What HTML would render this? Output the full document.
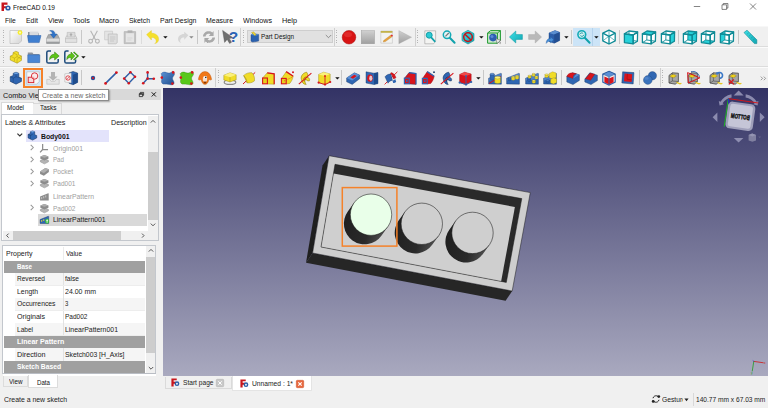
<!DOCTYPE html>
<html><head><meta charset="utf-8"><title>FreeCAD 0.19</title>
<style>
html,body{margin:0;padding:0;background:#f0f0f0;}
body{width:768px;height:408px;overflow:hidden;position:relative;font-family:"Liberation Sans",sans-serif;}
#root{position:absolute;left:0;top:0;width:768px;height:408px;overflow:hidden;background:#f0f0f0;}
.t{position:absolute;white-space:nowrap;line-height:normal;transform-origin:0 0;display:block;}
.b{position:absolute;box-sizing:border-box;}
svg{position:absolute;overflow:visible;}
</style></head><body><div id="root">
<div class="b" style="left:0px;top:0px;width:768px;height:26px;background:#ffffff;"></div>
<span class="t" style="left:13.00px;top:3.00px;font-size:7.3px;color:#111;transform:scaleX(0.9001);">FreeCAD 0.19</span>
<svg style="left:1px;top:1px" width="11" height="11" viewBox="0 0 11 11"><path d="M0.5 1.5h6v2.2H3v1.6h2.5v2H3V10H0.5z" fill="#c8161d"/><circle cx="7" cy="7" r="2.6" fill="#2b5ea7"/><circle cx="7" cy="7" r="1" fill="#fff"/></svg>
<span class="t" style="left:4.60px;top:16.00px;font-size:7.3px;color:#111;transform:scaleX(0.9181);">File</span>
<span class="t" style="left:25.60px;top:16.00px;font-size:7.3px;color:#111;transform:scaleX(0.9460);">Edit</span>
<span class="t" style="left:47.50px;top:16.00px;font-size:7.3px;color:#111;transform:scaleX(0.9878);">View</span>
<span class="t" style="left:72.70px;top:16.00px;font-size:7.3px;color:#111;transform:scaleX(0.9858);">Tools</span>
<span class="t" style="left:99.00px;top:16.00px;font-size:7.3px;color:#111;transform:scaleX(0.9861);">Macro</span>
<span class="t" style="left:129.00px;top:16.00px;font-size:7.3px;color:#111;transform:scaleX(0.9410);">Sketch</span>
<span class="t" style="left:159.50px;top:16.00px;font-size:7.3px;color:#111;transform:scaleX(0.9570);">Part Design</span>
<span class="t" style="left:206.00px;top:16.00px;font-size:7.3px;color:#111;transform:scaleX(0.9506);">Measure</span>
<span class="t" style="left:243.00px;top:16.00px;font-size:7.3px;color:#111;transform:scaleX(0.9793);">Windows</span>
<span class="t" style="left:282.00px;top:16.00px;font-size:7.3px;color:#111;transform:scaleX(0.9991);">Help</span>
<svg style="left:690px;top:0" width="78" height="13" viewBox="0 0 78 13"><g stroke="#333" stroke-width="0.6" fill="none"><path d="M3.8 6.5h6.4"/><path d="M32 4.8h4.6v4.6H32z M33.3 4.8V3.5h4.6v4.6h-1.3"/><path d="M60 3.5l6 6M66 3.5l-6 6"/></g></svg>
<div class="b" style="left:0px;top:26px;width:768px;height:62px;background:#f0f0f0;"></div>
<div class="b" style="left:0px;top:46px;width:768px;height:0.7px;background:#dcdcdc;"></div>
<div class="b" style="left:0px;top:46.7px;width:768px;height:0.8px;background:#fbfbfb;"></div>
<div class="b" style="left:0px;top:66px;width:768px;height:0.7px;background:#dcdcdc;"></div>
<div class="b" style="left:0px;top:66.7px;width:768px;height:0.8px;background:#fbfbfb;"></div>
<div class="b" style="left:0px;top:26px;width:768px;height:1px;background:#f7f7f7;"></div>
<div class="b" style="left:3px;top:30px;width:1px;height:14px;background:repeating-linear-gradient(#b5b5b5 0 1px,transparent 1px 2.5px);"></div>
<div class="b" style="left:243px;top:30px;width:1px;height:14px;background:repeating-linear-gradient(#b5b5b5 0 1px,transparent 1px 2.5px);"></div>
<div class="b" style="left:336px;top:30px;width:1px;height:14px;background:repeating-linear-gradient(#b5b5b5 0 1px,transparent 1px 2.5px);"></div>
<div class="b" style="left:417px;top:30px;width:1px;height:14px;background:repeating-linear-gradient(#b5b5b5 0 1px,transparent 1px 2.5px);"></div>
<div class="b" style="left:3px;top:50px;width:1px;height:14px;background:repeating-linear-gradient(#b5b5b5 0 1px,transparent 1px 2.5px);"></div>
<div class="b" style="left:3px;top:70px;width:1px;height:15px;background:repeating-linear-gradient(#b5b5b5 0 1px,transparent 1px 2.5px);"></div>
<div class="b" style="left:217.5px;top:70px;width:1px;height:15px;background:repeating-linear-gradient(#b5b5b5 0 1px,transparent 1px 2.5px);"></div>
<div class="b" style="left:662px;top:70px;width:1px;height:15px;background:repeating-linear-gradient(#b5b5b5 0 1px,transparent 1px 2.5px);"></div>
<div class="b" style="left:81px;top:30px;width:1px;height:14px;background:#c8c8c8;"></div>
<div class="b" style="left:197px;top:30px;width:1px;height:14px;background:#c8c8c8;"></div>
<div class="b" style="left:218px;top:30px;width:1px;height:14px;background:#c8c8c8;"></div>
<div class="b" style="left:505px;top:30px;width:1px;height:14px;background:#c8c8c8;"></div>
<div class="b" style="left:571px;top:30px;width:1px;height:14px;background:#c8c8c8;"></div>
<div class="b" style="left:619px;top:30px;width:1px;height:14px;background:#c8c8c8;"></div>
<div class="b" style="left:678px;top:30px;width:1px;height:14px;background:#c8c8c8;"></div>
<div class="b" style="left:738px;top:30px;width:1px;height:14px;background:#c8c8c8;"></div>
<div class="b" style="left:141px;top:30px;width:1px;height:14px;background:#dcdcdc;"></div>
<div class="b" style="left:240px;top:28px;width:1px;height:18px;background:#d0d0d0;"></div>
<div class="b" style="left:333.5px;top:28px;width:1px;height:18px;background:#d0d0d0;"></div>
<div class="b" style="left:414.5px;top:28px;width:1px;height:18px;background:#d0d0d0;"></div>
<div class="b" style="left:81px;top:70px;width:1px;height:15px;background:#c8c8c8;"></div>
<div class="b" style="left:483px;top:70px;width:1px;height:15px;background:#c8c8c8;"></div>
<div class="b" style="left:561px;top:70px;width:1px;height:15px;background:#c8c8c8;"></div>
<div class="b" style="left:639px;top:70px;width:1px;height:15px;background:#c8c8c8;"></div>
<div class="b" style="left:215px;top:68px;width:1px;height:19px;background:#d0d0d0;"></div>
<div class="b" style="left:659.5px;top:68px;width:1px;height:19px;background:#d0d0d0;"></div>
<div class="b" style="left:341px;top:70px;width:1px;height:15px;background:#c8c8c8;"></div>
<div class="b" style="left:247px;top:30px;width:86px;height:13px;background:#e1e1e1;border:1px solid #cecece;"></div>
<span class="t" style="left:261.00px;top:32.00px;font-size:7.3px;color:#111;transform:scaleX(0.8652);">Part Design</span>
<svg style="left:325px;top:34px" width="7" height="5" viewBox="0 0 7 5"><path d="M0.8 1l2.7 2.7L6.2 1" stroke="#555" stroke-width="0.6" fill="none"/></svg>
<div class="b" style="left:0px;top:88px;width:163px;height:302px;background:#f0f0f0;"></div>
<div class="b" style="left:0px;top:88.5px;width:160.5px;height:11px;background:#d9d9d9;"></div>
<span class="t" style="left:3.00px;top:91.00px;font-size:7.3px;color:#111;transform:scaleX(0.9939);">Combo View</span>
<svg style="left:136px;top:89px" width="24" height="10" viewBox="0 0 24 10"><g stroke="#1a1a1a" fill="none"><path d="M3.300 4.700h3.300v2.900H3.300zM4.300 4.500V3.400h3.300v2.900H6.800" stroke-width="0.750"/><path d="M3.300 5.100h3.300" stroke-width="0.900"/><path d="M15.700 3.300l4.200 4.200M19.900 3.300l-4.200 4.200" stroke-width="1"/></g></svg>
<div class="b" style="left:1px;top:101.5px;width:32.5px;height:13.5px;background:#ffffff;border:1px solid #d9d9d9;border-bottom:none;"></div>
<div class="b" style="left:33px;top:103px;width:28.5px;height:11.5px;background:#f0f0f0;border:1px solid #d9d9d9;border-left:none;"></div>
<span class="t" style="left:7.00px;top:103.00px;font-size:7.3px;color:#111;transform:scaleX(0.8550);">Model</span>
<span class="t" style="left:39.50px;top:103.00px;font-size:7.3px;color:#111;transform:scaleX(0.8842);">Tasks</span>
<div class="b" style="left:1px;top:114px;width:158px;height:127px;background:#ffffff;border:1px solid #c3c7cd;"></div>
<span class="t" style="left:4.50px;top:118.00px;font-size:7.3px;color:#222;transform:scaleX(0.9939);">Labels & Attributes</span>
<span class="t" style="left:111.30px;top:118.00px;font-size:7.3px;color:#222;transform:scaleX(0.9777);">Description</span>
<div class="b" style="left:148px;top:115.5px;width:9.5px;height:115.5px;background:#f0f0f0;"></div>
<div class="b" style="left:148px;top:152px;width:9.5px;height:68px;background:#cdcdcd;"></div>
<svg style="left:148px;top:116px" width="10" height="114" viewBox="0 0 10 114"><g stroke="#444" stroke-width="0.9" fill="none"><path d="M2.8 6.6L5 4.4 7.2 6.6"/><path d="M2.8 107.6L5 109.8 7.2 107.6"/></g></svg>
<div class="b" style="left:2.5px;top:231px;width:145.5px;height:9px;background:#f0f0f0;"></div>
<div class="b" style="left:12.5px;top:231px;width:108.5px;height:9px;background:#cdcdcd;"></div>
<div class="b" style="left:148px;top:231px;width:9.5px;height:9px;background:#f0f0f0;"></div>
<svg style="left:2.5px;top:231px" width="146" height="9" viewBox="0 0 146 9"><g stroke="#444" stroke-width="0.9" fill="none"><path d="M5.6 2.6L3.6 4.6 5.6 6.6"/><path d="M139 2.6l2 2-2 2"/></g></svg>
<div class="b" style="left:26px;top:129.75px;width:83px;height:12px;background:#e3e3fb;"></div>
<div class="b" style="left:38px;top:213.5px;width:109px;height:12px;background:#d9d9d9;"></div>
<svg style="left:16px;top:132px" width="8" height="6" viewBox="0 0 8 6"><path d="M1.4 1.6L3.800 4 6.200 1.600" stroke="#333" stroke-width="1.150" fill="none"/></svg>
<span class="t" style="left:41.00px;top:132.00px;font-size:7.3px;color:#111;font-weight:bold;transform:scaleX(0.9366);">Body001</span>
<span class="t" style="left:53.00px;top:144.00px;font-size:7.3px;color:#a0a0a0;transform:scaleX(0.9478);">Origin001</span>
<svg style="left:29px;top:144.4px" width="6" height="7" viewBox="0 0 6 7"><path d="M1.700 0.800l2.600 2.700L1.700 6.200" stroke="#979797" stroke-width="1.050" fill="none"/></svg>
<span class="t" style="left:53.00px;top:155.00px;font-size:7.3px;color:#a0a0a0;transform:scaleX(0.8468);">Pad</span>
<svg style="left:29px;top:156.25px" width="6" height="7" viewBox="0 0 6 7"><path d="M1.700 0.800l2.600 2.700L1.700 6.200" stroke="#979797" stroke-width="1.050" fill="none"/></svg>
<span class="t" style="left:53.00px;top:167.00px;font-size:7.3px;color:#a0a0a0;transform:scaleX(0.8962);">Pocket</span>
<svg style="left:29px;top:168.1px" width="6" height="7" viewBox="0 0 6 7"><path d="M1.700 0.800l2.600 2.700L1.700 6.200" stroke="#979797" stroke-width="1.050" fill="none"/></svg>
<span class="t" style="left:53.00px;top:179.00px;font-size:7.3px;color:#a0a0a0;transform:scaleX(0.8939);">Pad001</span>
<svg style="left:29px;top:180.25px" width="6" height="7" viewBox="0 0 6 7"><path d="M1.700 0.800l2.600 2.700L1.700 6.200" stroke="#979797" stroke-width="1.050" fill="none"/></svg>
<span class="t" style="left:53.00px;top:192.00px;font-size:7.3px;color:#a0a0a0;transform:scaleX(0.9354);">LinearPattern</span>
<span class="t" style="left:53.00px;top:204.00px;font-size:7.3px;color:#a0a0a0;transform:scaleX(0.8939);">Pad002</span>
<svg style="left:29px;top:204.4px" width="6" height="7" viewBox="0 0 6 7"><path d="M1.700 0.800l2.600 2.700L1.700 6.200" stroke="#979797" stroke-width="1.050" fill="none"/></svg>
<span class="t" style="left:53.00px;top:215.00px;font-size:7.3px;color:#222;transform:scaleX(0.9409);">LinearPattern001</span>
<div class="b" style="left:2px;top:245px;width:154px;height:129.2px;background:#ffffff;border:1px solid #c3c7cd;"></div>
<span class="t" style="left:5.50px;top:249.00px;font-size:7.3px;color:#222;transform:scaleX(0.9605);">Property</span>
<span class="t" style="left:66.00px;top:249.00px;font-size:7.3px;color:#222;transform:scaleX(0.8825);">Value</span>
<div class="b" style="left:62.5px;top:247px;width:0.6px;height:13px;background:#ececec;"></div>
<div class="b" style="left:3.5px;top:260.6px;width:141.5px;height:12.55px;background:#a0a0a0;"></div>
<span class="t" style="left:17.00px;top:262.00px;font-size:7.3px;color:#ffffff;font-weight:bold;transform:scaleX(0.8595);">Base</span>
<div class="b" style="left:15px;top:273.15px;width:130px;height:12.55px;background:#f5f5f5;"></div>
<div class="b" style="left:62.5px;top:273.15px;width:0.6px;height:12.55px;background:#e2e2e2;"></div>
<div class="b" style="left:15px;top:285.2px;width:130px;height:0.5px;background:#ededed;"></div>
<span class="t" style="left:17.00px;top:274.00px;font-size:7.3px;color:#222;transform:scaleX(0.8962);">Reversed</span>
<span class="t" style="left:65.00px;top:274.00px;font-size:7.3px;color:#222;transform:scaleX(0.9079);">false</span>
<div class="b" style="left:15px;top:285.7px;width:130px;height:12.55px;background:#ffffff;"></div>
<div class="b" style="left:62.5px;top:285.7px;width:0.6px;height:12.55px;background:#e2e2e2;"></div>
<div class="b" style="left:15px;top:297.75px;width:130px;height:0.5px;background:#ededed;"></div>
<span class="t" style="left:17.00px;top:287.00px;font-size:7.3px;color:#222;transform:scaleX(0.9405);">Length</span>
<span class="t" style="left:65.00px;top:287.00px;font-size:7.3px;color:#222;transform:scaleX(0.9551);">24.00 mm</span>
<div class="b" style="left:15px;top:298.25px;width:130px;height:12.55px;background:#f5f5f5;"></div>
<div class="b" style="left:62.5px;top:298.25px;width:0.6px;height:12.55px;background:#e2e2e2;"></div>
<div class="b" style="left:15px;top:310.3px;width:130px;height:0.5px;background:#ededed;"></div>
<span class="t" style="left:17.00px;top:299.00px;font-size:7.3px;color:#222;transform:scaleX(0.9304);">Occurrences</span>
<span class="t" style="left:65.00px;top:299.00px;font-size:7.3px;color:#222;transform:scaleX(0.8128);">3</span>
<div class="b" style="left:15px;top:310.8px;width:130px;height:12.55px;background:#ffffff;"></div>
<div class="b" style="left:62.5px;top:310.8px;width:0.6px;height:12.55px;background:#e2e2e2;"></div>
<div class="b" style="left:15px;top:322.85px;width:130px;height:0.5px;background:#ededed;"></div>
<span class="t" style="left:17.00px;top:312.00px;font-size:7.3px;color:#222;transform:scaleX(0.9720);">Originals</span>
<span class="t" style="left:65.00px;top:312.00px;font-size:7.3px;color:#222;transform:scaleX(0.8939);">Pad002</span>
<div class="b" style="left:15px;top:323.35px;width:130px;height:12.55px;background:#f5f5f5;"></div>
<div class="b" style="left:62.5px;top:323.35px;width:0.6px;height:12.55px;background:#e2e2e2;"></div>
<div class="b" style="left:15px;top:335.4px;width:130px;height:0.5px;background:#ededed;"></div>
<span class="t" style="left:17.00px;top:325.00px;font-size:7.3px;color:#222;transform:scaleX(0.8957);">Label</span>
<span class="t" style="left:65.00px;top:325.00px;font-size:7.3px;color:#222;transform:scaleX(0.9463);">LinearPattern001</span>
<div class="b" style="left:3.5px;top:335.9px;width:141.5px;height:12.55px;background:#a0a0a0;"></div>
<span class="t" style="left:17.00px;top:337.00px;font-size:7.3px;color:#ffffff;font-weight:bold;transform:scaleX(0.9636);">Linear Pattern</span>
<div class="b" style="left:15px;top:348.45px;width:130px;height:12.55px;background:#f5f5f5;"></div>
<div class="b" style="left:62.5px;top:348.45px;width:0.6px;height:12.55px;background:#e2e2e2;"></div>
<div class="b" style="left:15px;top:360.5px;width:130px;height:0.5px;background:#ededed;"></div>
<span class="t" style="left:17.00px;top:350.00px;font-size:7.3px;color:#222;transform:scaleX(0.9894);">Direction</span>
<span class="t" style="left:65.00px;top:350.00px;font-size:7.3px;color:#222;transform:scaleX(0.9340);">Sketch003 [H_Axis]</span>
<div class="b" style="left:3.5px;top:361.0px;width:141.5px;height:12.55px;background:#a0a0a0;"></div>
<span class="t" style="left:17.00px;top:362.00px;font-size:7.3px;color:#ffffff;font-weight:bold;transform:scaleX(0.9190);">Sketch Based</span>
<div class="b" style="left:3.5px;top:373.2px;width:152px;height:0.8px;background:#b9bdc4;"></div>
<div class="b" style="left:145.5px;top:246.25px;width:9.5px;height:127px;background:#f0f0f0;"></div>
<div class="b" style="left:145.5px;top:257px;width:9.5px;height:95.5px;background:#cdcdcd;"></div>
<svg style="left:145.5px;top:246px" width="10" height="127" viewBox="0 0 10 127"><g stroke="#444" stroke-width="0.9" fill="none"><path d="M2.8 5.6L5 3.4 7.2 5.6"/><path d="M2.8 121L5 123.2 7.2 121"/></g></svg>
<div class="b" style="left:2.5px;top:374px;width:153.5px;height:2px;background:#ffffff;"></div>
<div class="b" style="left:2.5px;top:376px;width:25.5px;height:10.5px;background:#f0f0f0;border:1px solid #dcdcdc;border-top:none;"></div>
<div class="b" style="left:28px;top:375px;width:29.5px;height:12.5px;background:#ffffff;border:1px solid #dcdcdc;border-top:none;"></div>
<span class="t" style="left:8.50px;top:377.00px;font-size:7.3px;color:#111;transform:scaleX(0.8603);">View</span>
<span class="t" style="left:37.00px;top:378.00px;font-size:7.3px;color:#111;transform:scaleX(0.8431);">Data</span>
<div class="b" style="left:0px;top:390px;width:768px;height:18px;background:#f0f0f0;"></div>
<span class="t" style="left:4.00px;top:395.00px;font-size:7.3px;color:#222;transform:scaleX(0.9467);">Create a new sketch</span>
<svg style="left:651px;top:394px" width="10" height="10" viewBox="0 0 10 10"><g fill="none" stroke="#222" stroke-width="1"><path d="M2 4.2C2.4 2.4 4 1.6 5.6 1.8L7.6 2.6"/><path d="M8 5.8C7.6 7.6 6 8.4 4.4 8.2L2.4 7.4"/></g><circle cx="7.8" cy="2.6" r="1.4" fill="#222"/><circle cx="2.2" cy="7.4" r="1.4" fill="#222"/></svg>
<div class="b" style="left:662px;top:393px;width:20.6px;height:14px;overflow:hidden;">
<span class="t" style="left:0.00px;top:2.00px;font-size:7.3px;color:#222;transform:scaleX(0.9242);">Gesture</span>
</div>
<svg style="left:683.6px;top:398px" width="5" height="4" viewBox="0 0 5 4"><path d="M0.4 0.6h4.2L2.5 3.2z" fill="#222"/></svg>
<div class="b" style="left:692.5px;top:393px;width:0.6px;height:13px;background:#d8d8d8;"></div>
<span class="t" style="left:695.60px;top:395.00px;font-size:7.3px;color:#222;transform:scaleX(0.9050);">140.77 mm x 67.03 mm</span>
<div class="b" style="left:163px;top:376px;width:605px;height:14px;background:#f0f0f0;"></div>
<div class="b" style="left:164.5px;top:377px;width:67.5px;height:12px;background:#f0f0f0;border:1px solid #dadada;border-top:none;"></div>
<div class="b" style="left:232px;top:376px;width:80px;height:14.5px;background:#ffffff;border:1px solid #e4e4e4;border-top:none;"></div>
<svg style="left:170.5px;top:378.3px" width="9" height="9" viewBox="0 0 11 11"><path d="M0.5 0.5h6.5v2.4H3.2v1.8h2.6v2.2H3.2V10.5H0.5z" fill="#c8161d"/><circle cx="7.3" cy="7" r="2.9" fill="#2b5ea7"/><circle cx="7.3" cy="7" r="1.1" fill="#fff"/></svg>
<svg style="left:240px;top:379px" width="9" height="9" viewBox="0 0 11 11"><path d="M0.5 0.5h6.5v2.4H3.2v1.8h2.6v2.2H3.2V10.5H0.5z" fill="#c8161d"/><circle cx="7.3" cy="7" r="2.9" fill="#2b5ea7"/><circle cx="7.3" cy="7" r="1.1" fill="#fff"/></svg>
<span class="t" style="left:182.50px;top:378.00px;font-size:7.3px;color:#222;transform:scaleX(0.9054);">Start page</span>
<span class="t" style="left:252.00px;top:379.00px;font-size:7.3px;color:#222;transform:scaleX(0.9185);">Unnamed : 1*</span>
<svg style="left:216px;top:379.3px" width="8" height="8" viewBox="0 0 8 8"><rect x="0.3" y="0.3" width="7.4" height="7.4" rx="1" fill="#c9c9c9" stroke="#aaa" stroke-width="0.5"/><path d="M2.3 2.3l3.4 3.4M5.7 2.3L2.3 5.7" stroke="#fff" stroke-width="1"/></svg>
<svg style="left:296px;top:380px" width="8" height="8" viewBox="0 0 8 8"><rect x="0.3" y="0.3" width="7.4" height="7.4" rx="1" fill="#e8683e" stroke="#c9512d" stroke-width="0.5"/><path d="M2.3 2.3l3.4 3.4M5.7 2.3L2.3 5.7" stroke="#fff" stroke-width="1.1"/></svg>
<div class="b" style="left:38px;top:89.2px;width:71.2px;height:11.8px;background:#ffffff;border:0.7px solid #8c8c8c;box-shadow:1px 1px 1.5px rgba(0,0,0,.3);"></div>
<span class="t" style="left:42.00px;top:91.00px;font-size:7.3px;color:#6a6a6a;transform:scaleX(0.9512);">Create a new sketch</span>
<svg width="0" height="0" style="left:0;top:0"><defs><linearGradient id="gy" x1="0" y1="0" x2="1" y2="1"><stop offset="0" stop-color="#fff36a"/><stop offset="1" stop-color="#d9b800"/></linearGradient><linearGradient id="gb" x1="0" y1="0" x2="1" y2="1"><stop offset="0" stop-color="#5b93d6"/><stop offset="1" stop-color="#1f4c8c"/></linearGradient><linearGradient id="gr" x1="0" y1="0" x2="1" y2="1"><stop offset="0" stop-color="#f03030"/><stop offset="1" stop-color="#b80c0c"/></linearGradient><linearGradient id="gg" x1="0" y1="0" x2="0" y2="1"><stop offset="0" stop-color="#d0d0d0"/><stop offset="1" stop-color="#a0a0a0"/></linearGradient><linearGradient id="gt" x1="0" y1="0" x2="1" y2="1"><stop offset="0" stop-color="#3ee0e6"/><stop offset="1" stop-color="#12a6b2"/></linearGradient><linearGradient id="gp" x1="0" y1="0" x2="1" y2="1"><stop offset="0" stop-color="#ffffff"/><stop offset="1" stop-color="#d4d4d4"/></linearGradient></defs></svg>
<svg style="left:8px;top:28.6px" width="16" height="16" viewBox="0 0 16 16"><path d="M2 1.5h11.5v10.5l-2.5 2.5H2z" fill="url(#gp)" stroke="#b5b5b5" stroke-width="0.6"/><circle cx="12" cy="3.6" r="2.4" fill="#f7ee2a"/><circle cx="12" cy="3.6" r="1.1" fill="#fffbb0"/></svg>
<svg style="left:26px;top:28.6px" width="16" height="16" viewBox="0 0 16 16"><path d="M2 3h5l1 1.2h5V12H2z" fill="#8a8f98"/><path d="M3.5 2.6h9v6h-9z" fill="#d8dade"/><path d="M1.5 6.5h13.5L13.2 13.6H2.6z" fill="#3f7fd0" stroke="#2a5ea8" stroke-width="0.5"/></svg>
<svg style="left:45px;top:28.6px" width="16" height="16" viewBox="0 0 16 16"><path d="M1.6 9.4l1.8-3.8h9.2l1.8 3.8v5H1.6z" fill="#a9abad" stroke="#808284" stroke-width="0.5"/><path d="M1.6 9.6h12.8v3.2H1.6z" fill="#dcdddd"/><path d="M1.6 12.8h12.8v1.6H1.6z" fill="#9a9c9e"/><path d="M4.6 1.8C7.6 0.8 10 2.2 10 5h2L8.6 9.2 5.4 5h2C7.4 3.4 6.4 2.2 4.6 1.8z" fill="#2f73c8" stroke="#1d55a0" stroke-width="0.4"/></svg>
<svg style="left:63px;top:28.6px" width="16" height="16" viewBox="0 0 16 16"><path d="M2.5 9l1.4-2.6h8.4L13.8 9v4.4H2.5z" fill="#e2e2e2" stroke="#a9a9a9" stroke-width="0.5"/><path d="M4.2 3.4h7.8V8H4.2z" fill="#dcdcdc" stroke="#b0b0b0" stroke-width="0.5"/><path d="M8 4l1.6 1.8H8.6v1.4H7.4V5.8H6.4z" fill="#a8a8a8"/><path d="M2.5 9.6h11.3" stroke="#b5b5b5" stroke-width="0.5"/></svg>
<svg style="left:86px;top:28.6px" width="16" height="16" viewBox="0 0 16 16"><g fill="none" stroke="#b4b4b4" stroke-width="1.1"><path d="M4.6 1.8L9.6 11"/><path d="M11.4 1.8L6.4 11"/><circle cx="4.6" cy="12.2" r="1.9"/><circle cx="11.4" cy="12.2" r="1.9"/></g></svg>
<svg style="left:103px;top:28.6px" width="16" height="16" viewBox="0 0 16 16"><path d="M1.6 2.2h8v8.6h-8z" fill="#e4e4e4" stroke="#c2c2c2" stroke-width="0.6"/><path d="M5.2 5h9v8.8l-1.4 1H5.2z" fill="#dedede" stroke="#b4b4b4" stroke-width="0.6"/><path d="M7 8h5.4M7 10h5.4M7 12h4" stroke="#c0c0c0" stroke-width="0.7"/></svg>
<svg style="left:122px;top:28.6px" width="16" height="16" viewBox="0 0 16 16"><path d="M2.2 2.6h11.4v12H2.2z" fill="#c4c4c4" stroke="#ababab" stroke-width="0.6"/><path d="M3.8 4.2h8.2v9H3.8z" fill="#e6e6e6"/><path d="M5.6 1.4h4.8v2.4H5.6z" fill="#b0b0b0"/><path d="M5.4 9h5M5.4 11h4" stroke="#cfcfcf" stroke-width="0.7"/></svg>
<svg style="left:145px;top:28.6px" width="16" height="16" viewBox="0 0 16 16"><path d="M1.6 5.6L6.4 1.6v2.6c4.4 0 7.4 2.6 7.2 6.4-0.2 2.2-1.6 3.6-3.8 4 1.6-1.2 1.8-3 0.8-4.400C9.600 8.800 8.200 8.400 6.400 8.400v2.600z" fill="#f5e02a" stroke="#e2c71a" stroke-width="0.4"/></svg>
<svg style="left:162.8px;top:35.8px" width="5" height="3" viewBox="0 0 5 3"><path d="M0.2 0.2h4.4L2.4 2.6z" fill="#111"/></svg>
<svg style="left:175px;top:28.6px" width="16" height="16" viewBox="0 0 16 16"><g transform="translate(1 1.4) scale(0.86)"><path d="M14.4 5.6L9.600 1.6v2.6c-4.400 0-7.400 2.600-7.200 6.400 0.200 2.200 1.600 3.600 3.800 4-1.600-1.200-1.800-3-0.800-4.400C6.400 8.800 7.800 8.400 9.600 8.400v2.600z" fill="#d6d6d6"/></g></svg>
<svg style="left:188.8px;top:35.8px" width="5" height="3" viewBox="0 0 5 3"><path d="M0.2 0.2h4.4L2.4 2.6z" fill="#8a8a8a"/></svg>
<svg style="left:201px;top:28.6px" width="16" height="16" viewBox="0 0 16 16"><g fill="#a9a9a9"><path d="M2 7.400C2.200 4 4.800 2 8 2.200c1.400 0 2.400 0.400 3.400 1.200L12.600 2v5H7.800l1.600-1.800C8.600 4.600 7.400 4.600 6.400 5 5.400 5.400 4.800 6.200 4.600 7.400z"/><path d="M14 8.600C13.800 12 11.200 14 8 13.800c-1.400 0-2.400-0.400-3.400-1.200L3.400 14V9h4.800L6.600 10.800c0.800 0.600 2 0.600 3 0.200 1-0.400 1.600-1.200 1.800-2.400z"/></g></svg>
<svg style="left:221px;top:28.6px" width="18" height="16" viewBox="0 0 18 16"><path d="M1.600 1.400l2 12 2.600-3 2.400 4 2-1.200L8.200 9.400l3.800-0.600z" fill="#6f6f6f" stroke="#4e4e4e" stroke-width="0.4"/><text x="12.4" y="13.4" font-family="Liberation Sans, sans-serif" font-weight="bold" font-size="15.5" fill="#2a62b4" text-anchor="middle">?</text></svg>
<svg style="left:249px;top:28.6px" width="12" height="16" viewBox="0 0 12 16"><g transform="translate(0.6 1.6) scale(0.86)"><path d="M1.6 5l2-1.600 7 1v7.800l-7 1.200-2-1z" fill="#2a62b0" stroke="#173c78" stroke-width="0.4"/><path d="M1.600 5l2-1.600 7 1-2.200 1.400z" fill="#5b93d6"/><path d="M2.200 2.200l2.600-0.800 2.800 3.400-1.600 1.200z" fill="#ecd53a" stroke="#8a7a10" stroke-width="0.3"/></g></svg>
<svg style="left:341px;top:28.6px" width="16" height="16" viewBox="0 0 16 16"><circle cx="8" cy="8.2" r="6.800" fill="#d81414" stroke="#a80c0c" stroke-width="0.5"/><ellipse cx="7" cy="5.600" rx="4" ry="2.600" fill="#e83a3a" opacity="0.6"/></svg>
<svg style="left:360px;top:28.6px" width="16" height="16" viewBox="0 0 16 16"><rect x="1.200" y="1.600" width="13.400" height="13.200" fill="url(#gg)" stroke="#9a9a9a" stroke-width="0.4"/></svg>
<svg style="left:379px;top:28.6px" width="16" height="16" viewBox="0 0 16 16"><path d="M1.800 2h11.600v12.200H1.800z" fill="#f2f2f0" stroke="#b9b9b9" stroke-width="0.5"/><path d="M1.800 2h11.600v1.800H1.800z" fill="#c2b24a"/><path d="M5 11.200l6.600-5 1.400 1.600-6.600 4.800-2.200 0.400z" fill="#e8a23a" stroke="#a86a1a" stroke-width="0.3"/><path d="M11.600 6.200l1.200-0.800 1.200 1.400-1 1z" fill="#e0242a"/></svg>
<svg style="left:397px;top:28.6px" width="16" height="16" viewBox="0 0 16 16"><path d="M1.800 1.600L14.600 8.200 1.800 14.800z" fill="url(#gg)" stroke="#a0a0a0" stroke-width="0.3"/></svg>
<svg style="left:423px;top:28.6px" width="16" height="16" viewBox="0 0 16 16"><path d="M1.800 1.800h10.800v10.400l-2 2.600H1.800z" fill="#f4f4f2" stroke="#8f8f8f" stroke-width="0.5"/><circle cx="6.200" cy="6.200" r="3" fill="#2ccad4" stroke="#0f98a2" stroke-width="0.9"/><path d="M8.400 8.600l3.400 3.800" stroke="#11a2ac" stroke-width="1.700" stroke-linecap="round"/></svg>
<svg style="left:441px;top:28.6px" width="16" height="16" viewBox="0 0 16 16"><circle cx="6" cy="5.800" r="3.700" fill="#e4f4f6" stroke="#14aab6" stroke-width="1.500"/><path d="M4.400 7.400l3.400-3.400" stroke="#777" stroke-width="1.200"/><path d="M9 9l4.600 4.800" stroke="#11a2ac" stroke-width="2" stroke-linecap="round"/></svg>
<svg style="left:460px;top:28.6px" width="16" height="16" viewBox="0 0 16 16"><path d="M8 1.200l6 3.400v7L8 15 2 11.600v-7z" fill="url(#gt)" stroke="#0f8e98" stroke-width="0.6"/><circle cx="8" cy="8.100" r="4.300" fill="none" stroke="#c2141a" stroke-width="1.500"/><path d="M5 5.200l6 5.800" stroke="#c2141a" stroke-width="1.500"/></svg>
<svg style="left:478.8px;top:35.8px" width="5" height="3" viewBox="0 0 5 3"><path d="M0.2 0.2h4.4L2.4 2.6z" fill="#111"/></svg>
<svg style="left:486px;top:28.6px" width="16" height="16" viewBox="0 0 16 16"><path d="M1.600 4l3-2.400h9.800v9.600l-3 3H1.600z" fill="#cfe9cf" stroke="#1e9a2e" stroke-width="1"/><path d="M1.600 4h9.800v10.200M11.400 4l3-2.400" fill="none" stroke="#1e9a2e" stroke-width="1"/><circle cx="7" cy="8.600" r="3.800" fill="#2c5eb2"/><circle cx="6" cy="7.400" r="1.500" fill="#5b8ad6"/><path d="M9.800 9.600l1.400 5 1.200-1.600 1.800 1.600 0.800-0.800-1.800-1.600 1.800-0.800z" fill="#e8e8e8" stroke="#444" stroke-width="0.4"/></svg>
<svg style="left:508px;top:28.6px" width="16" height="16" viewBox="0 0 16 16"><path d="M1.400 8l6.400-6v3.600h6.600v4.800H7.800V14z" fill="url(#gt)" stroke="#0f98a2" stroke-width="0.5"/></svg>
<svg style="left:527px;top:28.6px" width="16" height="16" viewBox="0 0 16 16"><path d="M14.600 8L8.200 2v3.600H1.600v4.800h6.600V14z" fill="#b9b9b9" stroke="#a5a5a5" stroke-width="0.4"/></svg>
<svg style="left:545px;top:28.6px" width="16" height="16" viewBox="0 0 16 16"><path d="M4 4l6-2.400 4.600 1.600v8.400l-5.400 2.600L4 12.400z" fill="#2c5ea8" stroke="#173c78" stroke-width="0.4"/><path d="M4 4l6-2.400 4.600 1.600-5.400 2.200z" fill="#5b8fd0"/><path d="M9.200 5.400v8.800l5.400-2.600V3.200z" fill="#234f92"/><path d="M1.200 14.400c0-3 1.400-4.800 4.200-4.800V7.800l3.400 3-3.400 3v-1.800c-1.800 0-3 0.800-4.200 2.400z" fill="#4a90d8" stroke="#1d55a0" stroke-width="0.4"/></svg>
<svg style="left:563.8px;top:35.8px" width="5" height="3" viewBox="0 0 5 3"><path d="M0.2 0.2h4.4L2.4 2.6z" fill="#111"/></svg>
<div class="b" style="left:572.8px;top:28px;width:27px;height:17.6px;background:#cce4f7;"></div>
<div class="b" style="left:592px;top:28px;width:0.6px;height:17.6px;background:#b4d2ec;"></div>
<svg style="left:576px;top:28.6px" width="16" height="16" viewBox="0 0 16 16"><circle cx="5.800" cy="5.600" r="3.900" fill="#d8f2f4" stroke="#14aab6" stroke-width="1.600"/><path d="M3.600 5.400c0.600-1.600 2.600-2 3.600-0.800M8 5.800c-0.600 1.600-2.600 2-3.600 0.800" stroke="#0e8e98" stroke-width="0.9" fill="none"/><path d="M8.800 8.800l4.800 5" stroke="#11a2ac" stroke-width="2" stroke-linecap="round"/></svg>
<svg style="left:593.5999999999999px;top:35.8px" width="5" height="3" viewBox="0 0 5 3"><path d="M0.2 0.2h4.4L2.4 2.6z" fill="#111"/></svg>
<svg style="left:601px;top:28.6px" width="16" height="16" viewBox="0 0 16 16"><g fill="none" stroke="#0f8b96" stroke-width="1.300" stroke-linejoin="round"><path d="M8 1.200l6.200 3v7.600L8 15l-6.200-3.200V4.200z" fill="#fff"/><path d="M1.800 4.200L8 7.400l6.200-3.200M8 7.400V15"/><path d="M8 1.200v6l-6.200 4.600M8 7.200l6.200 4.600" stroke-width="0.600"/></g></svg>
<svg style="left:623px;top:28.6px" width="16" height="16" viewBox="0 0 16 16"><g fill="none" stroke="#0f8b96" stroke-width="1.3" stroke-linejoin="round"><path d="M1.4 4.8L6 2L14.6 3L14.4 12.2L10.2 14.8L1.4 13.6z" fill="#ffffff" stroke="none"/><path d="M6 2L5.8 11L14.4 12.2M5.8 11L1.4 13.6" stroke-width="0.9"/><path d="M1.4 4.8L10.2 6L10.2 14.8L1.4 13.6z" fill="#28d2da" stroke="none"/><path d="M1.4 4.8L10.2 6L10.2 14.8L1.4 13.6z"/><path d="M1.4 4.8L6 2L14.6 3L10.2 6z"/><path d="M10.2 6L14.6 3L14.4 12.2L10.2 14.8z"/></g></svg>
<svg style="left:641px;top:28.6px" width="16" height="16" viewBox="0 0 16 16"><g fill="none" stroke="#0f8b96" stroke-width="1.3" stroke-linejoin="round"><path d="M1.4 4.8L6 2L14.6 3L14.4 12.2L10.2 14.8L1.4 13.6z" fill="#ffffff" stroke="none"/><path d="M6 2L5.8 11L14.4 12.2M5.8 11L1.4 13.6" stroke-width="0.9"/><path d="M1.4 4.8L6 2L14.6 3L10.2 6z" fill="#28d2da" stroke="none"/><path d="M1.4 4.8L10.2 6L10.2 14.8L1.4 13.6z"/><path d="M1.4 4.8L6 2L14.6 3L10.2 6z"/><path d="M10.2 6L14.6 3L14.4 12.2L10.2 14.8z"/></g></svg>
<svg style="left:660px;top:28.6px" width="16" height="16" viewBox="0 0 16 16"><g fill="none" stroke="#0f8b96" stroke-width="1.3" stroke-linejoin="round"><path d="M1.4 4.8L6 2L14.6 3L14.4 12.2L10.2 14.8L1.4 13.6z" fill="#ffffff" stroke="none"/><path d="M6 2L5.8 11L14.4 12.2M5.8 11L1.4 13.6" stroke-width="0.9"/><path d="M10.2 6L14.6 3L14.4 12.2L10.2 14.8z" fill="#28d2da" stroke="none"/><path d="M1.4 4.8L10.2 6L10.2 14.8L1.4 13.6z"/><path d="M1.4 4.8L6 2L14.6 3L10.2 6z"/><path d="M10.2 6L14.6 3L14.4 12.2L10.2 14.8z"/></g></svg>
<svg style="left:682px;top:28.6px" width="16" height="16" viewBox="0 0 16 16"><g fill="none" stroke="#0f8b96" stroke-width="1.3" stroke-linejoin="round"><path d="M1.4 4.8L6 2L14.6 3L14.4 12.2L10.2 14.8L1.4 13.6z" fill="#ffffff" stroke="none"/><path d="M6 2L14.6 3L14.4 12.2L5.8 11z" fill="#28d2da" stroke="none"/><path d="M6 2L5.8 11L14.4 12.2M5.8 11L1.4 13.6" stroke-width="0.9"/><path d="M1.4 4.8L10.2 6L10.2 14.8L1.4 13.6z"/><path d="M1.4 4.8L6 2L14.6 3L10.2 6z"/><path d="M10.2 6L14.6 3L14.4 12.2L10.2 14.8z"/></g></svg>
<svg style="left:700px;top:28.6px" width="16" height="16" viewBox="0 0 16 16"><g fill="none" stroke="#0f8b96" stroke-width="1.3" stroke-linejoin="round"><path d="M1.4 4.8L6 2L14.6 3L14.4 12.2L10.2 14.8L1.4 13.6z" fill="#ffffff" stroke="none"/><path d="M1.4 13.6L10.2 14.8L14.4 12.2L5.8 11z" fill="#28d2da" stroke="none"/><path d="M6 2L5.8 11L14.4 12.2M5.8 11L1.4 13.6" stroke-width="0.9"/><path d="M1.4 4.8L10.2 6L10.2 14.8L1.4 13.6z"/><path d="M1.4 4.8L6 2L14.6 3L10.2 6z"/><path d="M10.2 6L14.6 3L14.4 12.2L10.2 14.8z"/></g></svg>
<svg style="left:719px;top:28.6px" width="16" height="16" viewBox="0 0 16 16"><g fill="none" stroke="#0f8b96" stroke-width="1.3" stroke-linejoin="round"><path d="M1.4 4.8L6 2L14.6 3L14.4 12.2L10.2 14.8L1.4 13.6z" fill="#ffffff" stroke="none"/><path d="M1.4 4.8L6 2L5.8 11L1.4 13.6z" fill="#28d2da" stroke="none"/><path d="M6 2L5.8 11L14.4 12.2M5.8 11L1.4 13.6" stroke-width="0.9"/><path d="M1.4 4.8L10.2 6L10.2 14.8L1.4 13.6z"/><path d="M1.4 4.8L6 2L14.6 3L10.2 6z"/><path d="M10.2 6L14.6 3L14.4 12.2L10.2 14.8z"/></g></svg>
<svg style="left:742px;top:28.6px" width="16" height="16" viewBox="0 0 16 16"><path d="M2 3.600L5 1.200l9.800 9.600v3.800h-2.400z" fill="url(#gt)" stroke="#0f8b96" stroke-width="0.600"/><path d="M5.400 4.800l1-0.800M7.400 6.800l1-0.800M9.400 8.800l1-0.800M11.400 10.800l1-0.800" stroke="#0b6f78" stroke-width="0.500"/></svg>
<svg style="left:8px;top:49.2px" width="16" height="16" viewBox="0 0 16 16"><g transform="translate(0.8 1) scale(0.88)"><path d="M1.600 7l3.200-1.600V3L8 1.400l3 1.200v2.600l3.400 1.600v5L9.400 15 1.600 11.400z" fill="#f2de2c" stroke="#8e7c0c" stroke-width="0.500"/><path d="M1.600 7l4.800 2.200V13M6.400 9.200l3-1.600V5.400L4.800 3M9.400 7.600l5 2.400M9.400 15v-4.600l5-3.600" fill="none" stroke="#a8960e" stroke-width="0.500"/></g></svg>
<svg style="left:26px;top:49.2px" width="16" height="16" viewBox="0 0 16 16"><path d="M1.8 3.6h4.6l1 1.400h5.800V13.400H1.800z" fill="#8f949c"/><path d="M1.800 5.800h12v7.800h-12z" fill="#4a86d4" stroke="#2f66b0" stroke-width="0.500"/></svg>
<svg style="left:45px;top:49.2px" width="16" height="16" viewBox="0 0 16 16"><path d="M6 2H3.400C2.400 2 1.800 2.600 1.800 3.600v8.800c0 1 0.600 1.600 1.600 1.600h8.200c1 0 1.600-0.600 1.600-1.600V10" fill="none" stroke="#1d4b7c" stroke-width="1.500"/><path d="M4.600 10.600c0-3.400 1.800-5.400 5-5.400V3l4.600 4-4.600 4V8.400c-2.400 0-3.800 0.600-5 2.200z" fill="#5cc416" stroke="#2f7a0a" stroke-width="0.500"/></svg>
<svg style="left:63px;top:49.2px" width="16" height="16" viewBox="0 0 16 16"><path d="M5.600 2H3.400C2.400 2 1.800 2.600 1.800 3.600v8.800c0 1 0.600 1.600 1.600 1.600h7.600c1 0 1.600-0.600 1.600-1.600V10.600" fill="none" stroke="#1d4b7c" stroke-width="1.500"/><path d="M3.800 10.600c0-3.400 1.400-5.400 4.200-5.400V3l3.800 4L8 11V8.400c-2 0-3.200 0.600-4.200 2.200z" fill="#5cc416" stroke="#2f7a0a" stroke-width="0.500"/><path d="M10.600 3l4.400 4-4.400 4" fill="none" stroke="#3c9a0e" stroke-width="1.400"/></svg>
<svg style="left:81.3px;top:55.8px" width="5" height="3" viewBox="0 0 5 3"><path d="M0.2 0.2h4.4L2.4 2.6z" fill="#111"/></svg>
<svg style="left:8px;top:69.5px" width="16" height="16" viewBox="0 0 16 16"><g transform="translate(0.8 1) scale(0.88)"><path d="M1.600 6.600l3.400-1.400V2.600L8.200 1.400l3.200 1.200V7l3 1.200v3.600L8.200 15 1.600 11.800z" fill="#2f66b2" stroke="#14335f" stroke-width="0.600"/><path d="M1.600 6.600L5 8v5.200M5 8l3.200-1.400V1.600M8.200 6.600l6.200 1.600" fill="none" stroke="#17396b" stroke-width="0.500"/><path d="M5 2.600l3.200 1.200 3.200-1.200-3.200-1.200z" fill="#6ea2e0"/></g></g></svg>
<div class="b" style="left:23px;top:67.7px;width:20.3px;height:20.8px;background:#cfe6f8;border:2px solid #f5822a;"></div>
<svg style="left:25px;top:69.5px" width="16" height="16" viewBox="0 0 16 16"><path d="M1.800 1.800h12.400v9.800l-2.600 2.600H1.800z" fill="#f6f6f6" stroke="#a8a8a8" stroke-width="0.500"/><rect x="3.200" y="7.200" width="5.600" height="5.400" fill="#f7dada" stroke="#d8202a" stroke-width="0.900"/><circle cx="9.600" cy="6" r="3.200" fill="#fbe4e4" fill-opacity="0.700" stroke="#d8202a" stroke-width="0.900"/></svg>
<svg style="left:45px;top:69.5px" width="16" height="16" viewBox="0 0 16 16"><path d="M6 2h4v4.400h2.600L8 10.800 3.400 6.400H6z" fill="#b4b4b4"/><path d="M1.800 9.400h3l1.400 2h3.600l1.400-2h3v4.800H1.800z" fill="#e6e6e6" stroke="#b9b9b9" stroke-width="0.600"/></svg>
<svg style="left:63px;top:69.5px" width="16" height="16" viewBox="0 0 16 16"><path d="M6 3l4-1.600 4.600 1.600v9.400L10 14.800 6 13.200z" fill="#2f66b2" stroke="#14335f" stroke-width="0.500"/><path d="M10 4.800v10l4.600-2.400V3z" fill="#1f4c8c"/><path d="M1.800 3.800L8.200 3v10l-6.400-1z" fill="#f4f4f4" stroke="#999" stroke-width="0.400"/><circle cx="5" cy="8" r="2.200" fill="none" stroke="#d8202a" stroke-width="0.800"/><path d="M3.600 9.600l2.800-3" stroke="#d8202a" stroke-width="0.600"/></svg>
<svg style="left:90px;top:75.0px" width="6" height="6" viewBox="0 0 6 6"><circle cx="3" cy="3" r="2.200" fill="#2b4f9a"/><circle cx="3" cy="3" r="1.100" fill="#e01820"/></svg>
<svg style="left:103px;top:69.5px" width="16" height="16" viewBox="0 0 16 16"><path d="M2.600 13.400L13.400 2.600" stroke="#2f5ea6" stroke-width="1.500"/><circle cx="2.600" cy="13.400" r="1.400" fill="#d8141c"/><circle cx="13.400" cy="2.600" r="1.400" fill="#d8141c"/></svg>
<svg style="left:122px;top:69.5px" width="16" height="16" viewBox="0 0 16 16"><path d="M8.400 2.200l4.600 4.600-6.200 6.400L2.200 8.600z" fill="none" stroke="#2f5ea6" stroke-width="1.400"/><circle cx="8.400" cy="2.200" r="1.300" fill="#d8141c"/><circle cx="13" cy="6.800" r="1.300" fill="#d8141c"/><circle cx="6.800" cy="13.200" r="1.300" fill="#d8141c"/><circle cx="2.200" cy="8.600" r="1.300" fill="#d8141c"/></svg>
<svg style="left:141px;top:69.5px" width="16" height="16" viewBox="0 0 16 16"><path d="M6.600 2.400v6.200l6.200 0.200M6.600 8.600L2.200 13.200" fill="none" stroke="#2f5ea6" stroke-width="1.400"/><circle cx="6.600" cy="2.400" r="1.300" fill="#d8141c"/><circle cx="12.800" cy="8.800" r="1.300" fill="#d8141c"/><circle cx="2.200" cy="13.200" r="1.300" fill="#d8141c"/><circle cx="6.600" cy="8.600" r="1.300" fill="#d8141c"/></svg>
<svg style="left:160px;top:69.5px" width="16" height="16" viewBox="0 0 16 16"><path d="M1.6 3.2c1.2-1.2 3.2-1.4 4.8-0.600 2 1 4.400 0.400 6-1.200 1.800 0.400 2.600 2 1.800 3.600-0.800 1.600-2.200 2.400-1.600 4.200 0.600 1.600 1.800 2.600 1.400 4.400-0.800 1.400-2.600 1.400-4.200 1-2.200-0.600-4.600-0.200-6.600-0.600-1.600-0.600-2-2.200-1.600-3.800 0.600-2.400 0.200-4.600-0.400-6.600z" fill="url(#gb)" stroke="#244f90" stroke-width="0.400"/><circle cx="13.200" cy="2.400" r="1.300" fill="#d8141c"/><circle cx="1.800" cy="7.600" r="1.300" fill="#d8141c"/><circle cx="12.400" cy="13.600" r="1.300" fill="#d8141c"/></svg>
<svg style="left:179px;top:69.5px" width="16" height="16" viewBox="0 0 16 16"><path d="M1.6 3.2c1.2-1.2 3.2-1.4 4.8-0.600 2 1 4.400 0.400 6-1.200 1.800 0.400 2.600 2 1.800 3.600-0.800 1.600-2.200 2.400-1.600 4.200 0.600 1.600 1.800 2.600 1.400 4.400-0.800 1.400-2.600 1.400-4.200 1-2.200-0.600-4.600-0.200-6.600-0.600-1.600-0.600-2-2.200-1.600-3.800 0.600-2.400 0.200-4.600-0.400-6.600z" fill="#58c81a" stroke="#2f8a0a" stroke-width="0.400"/><circle cx="13.200" cy="2.400" r="1.300" fill="#d8141c"/><circle cx="1.800" cy="7.600" r="1.300" fill="#d8141c"/><circle cx="12.400" cy="13.600" r="1.300" fill="#d8141c"/></svg>
<svg style="left:197px;top:69.5px" width="16" height="16" viewBox="0 0 16 16"><path d="M1.400 9.600C2 5 4.400 1.600 8 1.600s6 3.400 6.600 8c-1 0.800-2 0.600-2.600-0.600-0.400 3-1.800 5.400-4 5.400s-3.600-2.400-4-5.400c-0.600 1.200-1.600 1.400-2.600 0.600z" fill="#f07818" stroke="#b85006" stroke-width="0.400"/><ellipse cx="8" cy="9" rx="2.200" ry="3" fill="#f8e0d0"/><circle cx="8.600" cy="7.400" r="1.300" fill="#fff"/><circle cx="8.800" cy="7.400" r="0.800" fill="#222"/><ellipse cx="8" cy="12.600" rx="1.400" ry="1" fill="#8a3a04"/></svg>
<svg style="left:222px;top:69.5px" width="16" height="16" viewBox="0 0 16 16"><ellipse cx="8" cy="12.200" rx="5.800" ry="2.200" fill="none" stroke="#8a8a8a" stroke-width="1.200"/><path d="M1.800 5.200L8 2.800l6.200 2v5L8 12 1.800 10z" fill="#f0dc28" stroke="#8e7c0c" stroke-width="0.400"/><path d="M1.800 5.200L8 7.200l6.200-2.400L8 2.800z" fill="#fbf07a"/><path d="M8 7.200V12" stroke="#8e7c0c" stroke-width="0.400"/></svg>
<svg style="left:241px;top:69.5px" width="16" height="16" viewBox="0 0 16 16"><path d="M2 14l12.200-11.600" stroke="#d8141c" stroke-width="1"/><path d="M2.600 5.600C5 3.200 8.400 2.200 11 2.800c2 2 3 5.400 2.400 8.200-2 1.600-5 2.400-7.400 1.800z" fill="#f0dc28" stroke="#8e7c0c" stroke-width="0.400"/><path d="M2.600 5.600c2 2 3.400 4.600 3.400 7.200" stroke="#8e7c0c" stroke-width="0.500" fill="none"/></svg>
<svg style="left:260px;top:69.5px" width="16" height="16" viewBox="0 0 16 16"><path d="M2.600 8L7.200 2.800l7 1V14.200L7.600 14z" fill="#f0dc28" stroke="#8e7c0c" stroke-width="0.400"/><path d="M7.200 2.800l7 1V14.200" fill="none" stroke="#d8141c" stroke-width="1.200"/><rect x="2.600" y="8" width="4.800" height="5.800" fill="#e8cf1c" stroke="#d8141c" stroke-width="1.100"/></svg>
<svg style="left:279px;top:69.5px" width="16" height="16" viewBox="0 0 16 16"><path d="M2.600 8.400C4.600 5.400 6 3.600 7.200 1.600l7 4.600c-0.600 3-1.600 5-3.400 7.200L7.400 14z" fill="#f0dc28" stroke="#8e7c0c" stroke-width="0.400"/><path d="M7.200 1.600l7 4.600" stroke="#d8141c" stroke-width="1.300"/><rect x="2.400" y="8.400" width="4.800" height="5.400" fill="#e8cf1c" stroke="#d8141c" stroke-width="1.100"/><circle cx="14" cy="2.200" r="1" fill="#d8141c"/><path d="M5 11l8-3.600" stroke="#d8141c" stroke-width="0.600" stroke-dasharray="1 1"/></svg>
<svg style="left:297px;top:69.5px" width="16" height="16" viewBox="0 0 16 16"><path d="M4.4 9.4C3.2 6.2 6.4 2.6 9.6 2.2 11 4 11.400 6 9.800 7.400 11.800 7.200 13.200 8.800 12.400 10.800 10.600 11.200 9 10.200 8.800 9 7.400 10.200 7.800 13 9.200 14.400 6.600 14.400 4.800 12.400 4.400 9.400z" fill="#f0dc28" stroke="#8e7c0c" stroke-width="0.600"/><path d="M6.400 8.800c1-1.800 2.600-2.200 3.400-1.400M8.800 9c-1 0.400-1.600 1.400-1.400 2.600" fill="none" stroke="#8e7c0c" stroke-width="0.700"/><path d="M1.800 14.200L14.400 3.200" stroke="#d8141c" stroke-width="1.100"/></svg>
<svg style="left:316px;top:69.5px" width="16" height="16" viewBox="0 0 16 16"><path d="M2.600 4.400L7.600 2.200l6.600 1.800v8L9 14.600 2.600 12.600z" fill="#f0dc28" stroke="#8e7c0c" stroke-width="0.400"/><path d="M2.600 4.400L9 6l5.200-2L7.600 2.200z" fill="#fbf07a"/><path d="M9 6v8.600M2.600 12.600L9 14.600l5.200-2.600" fill="none" stroke="#d8141c" stroke-width="0.900"/><circle cx="9" cy="6" r="0.900" fill="#d8141c"/><circle cx="2.600" cy="12.600" r="1.100" fill="#d8141c"/><circle cx="9" cy="14.600" r="1.100" fill="#d8141c"/><circle cx="14.200" cy="12" r="1.100" fill="#d8141c"/></svg>
<svg style="left:335.3px;top:76.5px" width="5" height="3" viewBox="0 0 5 3"><path d="M0.2 0.2h4.4L2.4 2.6z" fill="#111"/></svg>
<svg style="left:345px;top:69.5px" width="16" height="16" viewBox="0 0 16 16"><path d="M1.600 8l7.800-5.200 5.200 2.200v3.800L7.200 14.400 1.600 11.800z" fill="#2f66b2" stroke="#14335f" stroke-width="0.400"/><path d="M1.600 8l7.800-5.200 5.200 2.200-7.400 5.400z" fill="#5b8fd4"/><path d="M5.400 7.400L9.200 4.800l2.600 1.200L8 8.800z" fill="#d8141c"/></svg>
<svg style="left:364px;top:69.5px" width="16" height="16" viewBox="0 0 16 16"><path d="M2 1.800l8 1.400 4 -0.600v11l-4 1-8-1.600z" fill="#2f66b2" stroke="#14335f" stroke-width="0.400"/><path d="M10 3.200v11.400l4-1V2.600z" fill="#1f4c8c"/><ellipse cx="6" cy="8.200" rx="2.800" ry="3.600" fill="#d8141c"/><ellipse cx="6.800" cy="8.200" rx="1.600" ry="2.800" fill="#f0f0f0" opacity="0.8"/></svg>
<svg style="left:383px;top:69.5px" width="16" height="16" viewBox="0 0 16 16"><path d="M1.600 14.400L14.400 1.800" stroke="#d8141c" stroke-width="0.900"/><path d="M2 6.800c1.800-2.200 3.800-3 6-2.600l1.400 6.200C7.600 10.400 6.200 11.400 5 13.200z" fill="#2f66b2" stroke="#14335f" stroke-width="0.400"/><path d="M8 2.600c2.400 0.400 4.200 2.400 5 5 -0.600 1-1.600 1.400-2.800 1.200C9.800 6.600 9 4.800 7.400 3.800z" fill="#d8141c" stroke="#8a0c10" stroke-width="0.300"/><path d="M9.400 10.400c1.200 0.200 2.200-0.400 2.800-1.400l1 2.800c-0.800 1-1.800 1.400-3 1.200z" fill="#2f66b2"/></svg>
<svg style="left:402px;top:69.5px" width="16" height="16" viewBox="0 0 16 16"><path d="M2.400 8.200L7 2.600l7 1v10.800L7.400 14z" fill="#d8141c" stroke="#14335f" stroke-width="0.400"/><path d="M7 2.600l7 1v10.800" fill="none" stroke="#2f66b2" stroke-width="1.100"/><rect x="2.400" y="8.200" width="4.800" height="5.600" fill="#d8141c" stroke="#2f66b2" stroke-width="1.200"/><rect x="4" y="10" width="1.600" height="2" fill="#2f66b2"/></svg>
<svg style="left:420px;top:69.5px" width="16" height="16" viewBox="0 0 16 16"><path d="M2.600 8.400C4.600 5.400 6 3.600 7.200 1.600l7 4.600c-0.600 3-1.600 5-3.400 7.200L7.400 14z" fill="#d8141c" stroke="#8a0c10" stroke-width="0.400"/><path d="M7.200 1.600l7 4.600" stroke="#2f66b2" stroke-width="1.300"/><rect x="2.400" y="8.400" width="4.800" height="5.400" fill="#d8141c" stroke="#2f66b2" stroke-width="1.200"/><rect x="4" y="10.200" width="1.600" height="1.800" fill="#2f66b2"/><circle cx="14" cy="2.200" r="0.900" fill="#14335f"/></svg>
<svg style="left:439px;top:69.5px" width="16" height="16" viewBox="0 0 16 16"><path d="M4.4 9.4C3.2 6.2 6.4 2.6 9.6 2.2 11 4 11.400 6 9.800 7.400 11.800 7.200 13.200 8.800 12.400 10.800 10.600 11.200 9 10.200 8.800 9 7.400 10.200 7.800 13 9.200 14.400 6.600 14.400 4.800 12.400 4.400 9.400z" fill="#2f66b2" stroke="#14335f" stroke-width="0.600"/><path d="M6.400 8.800c1-1.800 2.600-2.200 3.400-1.400M8.800 9c-1 0.400-1.600 1.400-1.400 2.600" fill="none" stroke="#14335f" stroke-width="0.700"/><path d="M1.800 14.200L14.400 3.200" stroke="#d8141c" stroke-width="1.100"/></svg>
<svg style="left:457px;top:69.5px" width="16" height="16" viewBox="0 0 16 16"><path d="M2.600 4.400L7.600 2.200l6.600 1.800v8L9 14.600 2.600 12.600z" fill="#d8141c" stroke="#8a0c10" stroke-width="0.400"/><path d="M2.600 4.400L9 6l5.200-2L7.600 2.200z" fill="#f04a4a"/><path d="M9 6v8.600M2.600 12.600L9 14.600l5.200-2.600" fill="none" stroke="#2f66b2" stroke-width="0.900"/><circle cx="9" cy="6" r="0.900" fill="#2f66b2"/><circle cx="2.600" cy="12.600" r="1.100" fill="#2f66b2"/><circle cx="9" cy="14.600" r="1.100" fill="#2f66b2"/><circle cx="14.200" cy="12" r="1.100" fill="#2f66b2"/></svg>
<svg style="left:476.3px;top:76.5px" width="5" height="3" viewBox="0 0 5 3"><path d="M0.2 0.2h4.4L2.4 2.6z" fill="#111"/></svg>
<svg style="left:487px;top:69.5px" width="16" height="16" viewBox="0 0 16 16"><path d="M1.600 8.200L13.600 3.400l0.800 0.200v10.600l-12.800-0.200z" fill="#2f66b2" stroke="#14335f" stroke-width="0.400"/><path d="M1.600 8.200L13.600 3.400l0.800 0.200-1.400 5.600L1.600 10.400z" fill="#5b8fd4" opacity="0.7"/><path d="M2 13.400L13.600 6.600" stroke="#d8141c" stroke-width="1"/><path d="M3.0 4.2v4.8a2.2 0.9900000000000001 0 0 0 4.4 0v-4.8z" fill="#2f66b2" stroke="#14335f" stroke-width="0.300"/><ellipse cx="5.2" cy="4.2" rx="2.2" ry="0.9900000000000001" fill="#5b8fd4" stroke="#14335f" stroke-width="0.300"/><path d="M7.699999999999999 7.6v4.6a2.9 1.305 0 0 0 5.8 0v-4.6z" fill="#f0dc28" stroke="#8e7c0c" stroke-width="0.300"/><ellipse cx="10.6" cy="7.6" rx="2.9" ry="1.305" fill="#fbf07a" stroke="#8e7c0c" stroke-width="0.300"/></svg>
<svg style="left:505px;top:69.5px" width="16" height="16" viewBox="0 0 16 16"><path d="M1.600 8.200L13.600 3.400l0.800 0.200v10.600l-12.800-0.200z" fill="#2f66b2" stroke="#14335f" stroke-width="0.400"/><path d="M1.600 8.200L13.600 3.400l0.800 0.200-1.400 5.600L1.600 10.400z" fill="#5b8fd4" opacity="0.7"/><path d="M2.9000000000000004 8v2a1.5 0.675 0 0 0 3.0 0v-2z" fill="#2f66b2" stroke="#14335f" stroke-width="0.300"/><ellipse cx="4.4" cy="8" rx="1.5" ry="0.675" fill="#5b8fd4" stroke="#14335f" stroke-width="0.300"/><path d="M6.499999999999999 7v2.4a1.7 0.765 0 0 0 3.4 0v-2.4z" fill="#f0dc28" stroke="#8e7c0c" stroke-width="0.300"/><ellipse cx="8.2" cy="7" rx="1.7" ry="0.765" fill="#fbf07a" stroke="#8e7c0c" stroke-width="0.300"/><path d="M10.3 6v2.4a1.7 0.765 0 0 0 3.4 0v-2.4z" fill="#f0dc28" stroke="#8e7c0c" stroke-width="0.300"/><ellipse cx="12" cy="6" rx="1.7" ry="0.765" fill="#fbf07a" stroke="#8e7c0c" stroke-width="0.300"/></svg>
<svg style="left:524px;top:69.5px" width="16" height="16" viewBox="0 0 16 16"><path d="M1.600 8.200L13.600 3.400l0.800 0.200v10.600l-12.800-0.200z" fill="#2f66b2" stroke="#14335f" stroke-width="0.400"/><path d="M1.600 8.200L13.600 3.400l0.800 0.200-1.400 5.600L1.600 10.400z" fill="#5b8fd4" opacity="0.7"/><path d="M3.5 8.6v2a1.5 0.675 0 0 0 3.0 0v-2z" fill="#2f66b2" stroke="#14335f" stroke-width="0.300"/><ellipse cx="5" cy="8.6" rx="1.5" ry="0.675" fill="#5b8fd4" stroke="#14335f" stroke-width="0.300"/><path d="M4.1 5.8v1.8a1.5 0.675 0 0 0 3.0 0v-1.8z" fill="#f0dc28" stroke="#8e7c0c" stroke-width="0.300"/><ellipse cx="5.6" cy="5.8" rx="1.5" ry="0.675" fill="#fbf07a" stroke="#8e7c0c" stroke-width="0.300"/><path d="M8.1 4v1.8a1.5 0.675 0 0 0 3.0 0v-1.8z" fill="#f0dc28" stroke="#8e7c0c" stroke-width="0.300"/><ellipse cx="9.6" cy="4" rx="1.5" ry="0.675" fill="#fbf07a" stroke="#8e7c0c" stroke-width="0.300"/><path d="M10.9 6.6v1.8a1.5 0.675 0 0 0 3.0 0v-1.8z" fill="#f0dc28" stroke="#8e7c0c" stroke-width="0.300"/><ellipse cx="12.4" cy="6.6" rx="1.5" ry="0.675" fill="#fbf07a" stroke="#8e7c0c" stroke-width="0.300"/><path d="M8.200000000000001 10.6v2a1.6 0.7200000000000001 0 0 0 3.2 0v-2z" fill="#f0dc28" stroke="#8e7c0c" stroke-width="0.300"/><ellipse cx="9.8" cy="10.6" rx="1.6" ry="0.7200000000000001" fill="#fbf07a" stroke="#8e7c0c" stroke-width="0.300"/></svg>
<svg style="left:542px;top:69.5px" width="16" height="16" viewBox="0 0 16 16"><path d="M1.600 8.200L13.600 3.400l0.800 0.200v10.600l-12.800-0.200z" fill="#2f66b2" stroke="#14335f" stroke-width="0.400"/><path d="M1.600 8.200L13.600 3.400l0.800 0.200-1.400 5.600L1.600 10.400z" fill="#5b8fd4" opacity="0.7"/><path d="M4.1 10.4v2a1.5 0.675 0 0 0 3.0 0v-2z" fill="#2f66b2" stroke="#14335f" stroke-width="0.300"/><ellipse cx="5.6" cy="10.4" rx="1.5" ry="0.675" fill="#5b8fd4" stroke="#14335f" stroke-width="0.300"/><path d="M2.8999999999999995 4.6v2.2a1.7 0.765 0 0 0 3.4 0v-2.2z" fill="#f0dc28" stroke="#8e7c0c" stroke-width="0.300"/><ellipse cx="4.6" cy="4.6" rx="1.7" ry="0.765" fill="#fbf07a" stroke="#8e7c0c" stroke-width="0.300"/><path d="M7.200 3.400l3.400-1.600 3.600 1.200v4.400l-3.400 1.600-3.600-1.200z" fill="#f0dc28" stroke="#8e7c0c" stroke-width="0.300"/><path d="M8.600 9.200l3-1.400 3 1v3.800l-3 1.400-3-1z" fill="#f0dc28" stroke="#8e7c0c" stroke-width="0.300"/></svg>
<svg style="left:565px;top:69.5px" width="16" height="16" viewBox="0 0 16 16"><path d="M1.800 6.200L7.600 2.800l6.800 2v5.600L8 14.600 1.800 12z" fill="#2f66b2" stroke="#14335f" stroke-width="0.400"/><path d="M1.800 6.600C2.400 4 5 2.600 7.800 2.800l3.800 1C9 4 7.800 5.600 8 8.400z" fill="#d8141c" stroke="#8a0c10" stroke-width="0.300"/><path d="M11.600 3.800l2.800 1-6.400 3.600" fill="#5b8fd4"/></svg>
<svg style="left:583px;top:69.5px" width="16" height="16" viewBox="0 0 16 16"><path d="M1.800 9l5-6.200 7.600 2.400v5.400L8 14.600 1.800 12z" fill="#2f66b2" stroke="#14335f" stroke-width="0.400"/><path d="M2.400 8.800l4.800-5.800 4.600 1.200-4.200 6z" fill="#d8141c" stroke="#8a0c10" stroke-width="0.300"/></svg>
<svg style="left:601px;top:69.5px" width="16" height="16" viewBox="0 0 16 16"><path d="M8 1.400l6.200 2.800v7.800L8 15l-6.200-3V4.200z" fill="none" stroke="#2f66b2" stroke-width="1.200"/><path d="M8 1.400L14.200 4.200 8 7 1.800 4.200z" fill="#5b8fd4" stroke="#14335f" stroke-width="0.300"/><path d="M3.400 6.600L8 8.600l4.600-2v5.600L8 14.400l-4.600-2.200z" fill="#d8141c"/><path d="M8 7v8" stroke="#2f66b2" stroke-width="1"/></svg>
<svg style="left:620px;top:69.5px" width="16" height="16" viewBox="0 0 16 16"><path d="M2.600 1.800l11.400 0.800-0.800 11.400-11.400-1z" fill="#2f66b2" stroke="#14335f" stroke-width="0.400"/><path d="M4.600 3.600l7.600 0.600-0.600 7.800-7.600-0.800z" fill="#d8141c"/><path d="M7.400 3.800l-0.400 5.400 4.800 0.800" fill="none" stroke="#8a0c10" stroke-width="0.500"/></svg>
<svg style="left:642px;top:69.5px" width="16" height="16" viewBox="0 0 16 16"><circle cx="10.400" cy="5.800" r="4.200" fill="#2f66b2" stroke="#14335f" stroke-width="0.300"/><circle cx="5.800" cy="10" r="4.400" fill="#3a72bc" stroke="#14335f" stroke-width="0.300"/><ellipse cx="4.600" cy="8.400" rx="2" ry="1.400" fill="#5b8fd4" opacity="0.600"/></svg>
<svg style="left:667px;top:69.5px" width="16" height="16" viewBox="0 0 16 16"><path d="M2 5.400l3.400-2.600 6 0.400v8.400l-3.200 2.600-6.200-1.200z" fill="#a6a6a6" stroke="#333" stroke-width="0.700"/><path d="M5.400 2.800v8.200l-3.400 2M5.400 11l6 0.600" fill="none" stroke="#4a4a4a" stroke-width="0.600"/><path d="M3 6.600c1-2.600 4.400-2.800 6.400-0.600l-3 1.800z" fill="#f0d21a" stroke="#6a5a08" stroke-width="0.300"/><path d="M9.600 12.400l3.400 1.400 1.400-0.600" stroke="#e8c81a" stroke-width="1.200" fill="none"/></svg>
<svg style="left:686px;top:69.5px" width="16" height="16" viewBox="0 0 16 16"><path d="M2 5.400l3.400-2.600 6 0.400v8.400l-3.200 2.600-6.200-1.200z" fill="#a6a6a6" stroke="#333" stroke-width="0.700"/><path d="M5.400 2.800v8.200l-3.400 2M5.400 11l6 0.600" fill="none" stroke="#4a4a4a" stroke-width="0.600"/><path d="M3 6.600c1-2.600 4.400-2.800 6.400-0.600l-3 1.800z" fill="#f0d21a" stroke="#6a5a08" stroke-width="0.300"/><path d="M9.600 12.400l3.400 1.400 1.400-0.600" stroke="#e8c81a" stroke-width="1.200" fill="none"/><path d="M1.600 2.600l0.800 10.400 11.400-5.200z" fill="none" stroke="#d8141c" stroke-width="1"/><path d="M5 1.800c4-1 7.600 1.200 8.400 5" fill="none" stroke="#2f5ea6" stroke-width="1"/></svg>
<svg style="left:708px;top:69.5px" width="18" height="16" viewBox="0 0 18 16"><path d="M2 5.400l3.400-2.600 6 0.400v8.400l-3.200 2.600-6.200-1.200z" fill="#a6a6a6" stroke="#333" stroke-width="0.700"/><path d="M5.400 2.800v8.200l-3.400 2M5.400 11l6 0.600" fill="none" stroke="#4a4a4a" stroke-width="0.600"/><path d="M3 6.600c1-2.600 4.400-2.800 6.400-0.600l-3 1.800z" fill="#f0d21a" stroke="#6a5a08" stroke-width="0.300"/><path d="M9.600 12.400l3.400 1.400 1.400-0.600" stroke="#e8c81a" stroke-width="1.200" fill="none"/><path d="M9 3.600c1.600-1.800 4.600-1.400 5.400 1 0.600 2-0.800 3.800-2.800 3.800" fill="none" stroke="#3a78c8" stroke-width="1.600"/><path d="M8.200 2l0.400 3 2.600-1.400z" fill="#3a78c8"/></svg>
<svg style="left:727px;top:69.5px" width="16" height="16" viewBox="0 0 16 16"><path d="M2 5.400l3.400-2.600 6 0.400v8.400l-3.200 2.600-6.200-1.200z" fill="#a6a6a6" stroke="#333" stroke-width="0.700"/><path d="M5.400 2.800v8.200l-3.400 2M5.400 11l6 0.600" fill="none" stroke="#4a4a4a" stroke-width="0.600"/><path d="M3 6.600c1-2.600 4.400-2.800 6.400-0.600l-3 1.800z" fill="#f0d21a" stroke="#6a5a08" stroke-width="0.300"/><path d="M9.600 12.400l3.400 1.400 1.400-0.600" stroke="#e8c81a" stroke-width="1.200" fill="none"/><path d="M1.800 9.400l5 5M6.800 9.400l-5 5" stroke="#d8141c" stroke-width="1.300"/></svg>
<svg style="left:760px;top:75.5px" width="7" height="5" viewBox="0 0 7 5"><path d="M0.800 0.600l1.800 1.800-1.800 1.800M3.800 0.600l1.800 1.800-1.800 1.800" stroke="#555" stroke-width="0.550" fill="none"/></svg>
<svg style="left:27px;top:130.29999999999998px" width="10.8" height="10.8" viewBox="0 0 16 16"><path d="M1.600 6.600l3.400-1.400V2.600L8.200 1.400l3.200 1.200V7l3 1.200v3.600L8.200 15 1.600 11.800z" fill="#2f66b2" stroke="#14335f" stroke-width="0.800"/><path d="M5 2.600l3.200 1.200 3.200-1.200-3.200-1.200z" fill="#7eaee6"/><path d="M1.600 6.600L5 8v5.200M5 8l3.200-1.400" fill="none" stroke="#14335f" stroke-width="0.700"/></svg>
<svg style="left:39px;top:142.5px" width="10.8" height="10.8" viewBox="0 0 16 16"><path d="M5.400 1.600v8l8 0.200M5.400 9.600L1.600 14" fill="none" stroke="#8c8c8c" stroke-width="1.800"/></svg>
<svg style="left:39px;top:154.35px" width="10.8" height="10.8" viewBox="0 0 16 16"><path d="M2 9.600L8 7.400l6 2.200v2L8 14.600 2 11.600z" fill="#b5b5b5" stroke="#8c8c8c" stroke-width="0.800"/><path d="M2 3.600L8 1.600l6 2v3.600L8 9.600 2 7.200z" fill="#8c8c8c"/><path d="M2 3.600L8 5.400l6-1.800L8 1.600z" fill="#adadad"/></svg>
<svg style="left:39px;top:166.2px" width="10.8" height="10.8" viewBox="0 0 16 16"><path d="M1.600 8l7.800-5.200 5.200 2.200v3.800L7.200 14.400 1.600 11.800z" fill="#8c8c8c"/><path d="M1.600 8l7.800-5.200 5.200 2.200-7.400 5.400z" fill="#b0b0b0"/></svg>
<svg style="left:39px;top:178.35px" width="10.8" height="10.8" viewBox="0 0 16 16"><path d="M2 9.600L8 7.400l6 2.200v2L8 14.600 2 11.600z" fill="#b5b5b5" stroke="#8c8c8c" stroke-width="0.800"/><path d="M2 3.600L8 1.600l6 2v3.600L8 9.600 2 7.200z" fill="#8c8c8c"/><path d="M2 3.600L8 5.400l6-1.800L8 1.600z" fill="#adadad"/></svg>
<svg style="left:39px;top:190.6px" width="10.8" height="10.8" viewBox="0 0 16 16"><path d="M1.600 8.200L13.600 3.400l0.800 0.200v10.600l-12.800-0.200z" fill="#8c8c8c"/><path d="M4 9v3M7 7.800v3M10 6.600v3" stroke="#c8c8c8" stroke-width="1.400"/></svg>
<svg style="left:39px;top:202.5px" width="10.8" height="10.8" viewBox="0 0 16 16"><path d="M2 9.600L8 7.400l6 2.200v2L8 14.600 2 11.600z" fill="#b5b5b5" stroke="#8c8c8c" stroke-width="0.800"/><path d="M2 3.600L8 1.600l6 2v3.600L8 9.600 2 7.200z" fill="#8c8c8c"/><path d="M2 3.600L8 5.400l6-1.800L8 1.600z" fill="#adadad"/></svg>
<svg style="left:39px;top:214.35px" width="10.8" height="10.8" viewBox="0 0 16 16"><path d="M1.600 8.200L13.600 3.400l0.800 0.200v10.600l-12.800-0.200z" fill="#2f66b2" stroke="#14335f" stroke-width="0.600"/><path d="M4 9v2.600M7 7.800v2.600" stroke="#e8d82a" stroke-width="1.400"/><ellipse cx="12" cy="10.600" rx="2.800" ry="4" fill="#38c038"/><path d="M12 7.600l1.600 2.400h-1v3h-1.200v-3h-1z" fill="#fff"/></svg>
<svg style="left:163px;top:88px" width="605" height="288" viewBox="163 88 605 288"><defs><linearGradient id="bg" x1="0" y1="0" x2="0" y2="1"><stop offset="0" stop-color="#333365"/><stop offset="1" stop-color="#a9a9bf"/></linearGradient><clipPath id="rim"><polygon points="335.0,164.3 521.8,198.6 506.3,282.4 321.0,247.0"/></clipPath><linearGradient id="cyl" x1="0" y1="0" x2="1" y2="0.3"><stop offset="0" stop-color="#1e1e1e"/><stop offset="0.7" stop-color="#2a2a2a"/><stop offset="1" stop-color="#4a4a4a"/></linearGradient></defs><rect x="163" y="88" width="605" height="288" fill="url(#bg)"/><polygon points="329.1,155.7 312.6,253.0 306.0,262.8 322.5,165.5" fill="#1f1f1f"/><polygon points="312.6,253.0 512.2,291.0 505.6,300.8 306.0,262.8" fill="#262626"/><polygon points="329.1,155.7 530.3,192.6 512.2,291.0 312.6,253.0" fill="#cecece" stroke="#1a1a1a" stroke-width="0.5"/><polygon points="335.0,164.3 521.8,198.6 506.3,282.4 321.0,247.0" fill="#2a2a2a"/><g clip-path="url(#rim)"><polygon points="328.1,172.6 514.9,206.9 499.4,290.7 314.1,255.3" fill="#cfcfcf"/><path d="M354.2 202.6L347.8 211.5A20.7 20.7 0 0 0 381.4 235.7L387.8 226.8Z" fill="url(#cyl)"/><path d="M405.0 211.7L398.6 220.6A20.7 20.7 0 0 0 432.2 244.8L438.6 235.9Z" fill="url(#cyl)"/><path d="M455.7 220.8L449.3 229.7A20.7 20.7 0 0 0 482.9 253.9L489.3 245.0Z" fill="url(#cyl)"/><circle cx="371.0" cy="214.7" r="20.7" fill="#e9ffe9" stroke="#1a1a1a" stroke-width="0.55"/><circle cx="421.8" cy="223.8" r="20.7" fill="#cfcfcf" stroke="#1a1a1a" stroke-width="0.55"/><circle cx="472.5" cy="232.9" r="20.7" fill="#cfcfcf" stroke="#1a1a1a" stroke-width="0.55"/></g><polygon points="335.0,164.3 521.8,198.6 506.3,282.4 321.0,247.0" fill="none" stroke="#1a1a1a" stroke-width="0.5"/><rect x="342.3" y="187.6" width="54.6" height="58.5" fill="none" stroke="#f5822a" stroke-width="1.5"/><g fill="#a0a0c0" opacity="0.8"><polygon points="738.6,90.6 733.6,95.6 743.6,95.6"/><polygon points="738.6,142.5 733.8,138 743.4,138"/><polygon points="712.6,117.2 717.4,112.4 717.4,122"/><polygon points="764.6,117.2 759.8,112.4 759.8,122"/><path d="M731.5 94.2C726.5 95.2 722.5 98 720.5 101.8L718.8 101 719.6 105.6 724 104.2 722.6 103.2C724.4 100.4 727.6 98.4 731.6 97.6Z"/><path d="M745.7 94.2C750.7 95.2 754.7 98 756.7 101.8L758.4 101 757.6 105.6 753.2 104.2 754.6 103.2C752.8 100.4 749.6 98.4 745.6 97.6Z"/></g><g transform="rotate(8 740.4 116.3)"><rect x="726.6" y="102.8" width="27.6" height="27" rx="4.5" fill="#b0b0c8" opacity="0.85"/><rect x="729" y="105" width="22.8" height="22.6" rx="2.5" fill="#c5c5d7"/><text x="740.4" y="119" text-anchor="middle" font-family="Liberation Sans, sans-serif" font-weight="bold" font-size="6.6" fill="#050505" stroke="#050505" stroke-width="0.35" transform="translate(1480.8 0) scale(-1 1)" textLength="19" lengthAdjust="spacingAndGlyphs">BOTTOM</text></g><path d="M728.3 98.6L758.4 103" stroke="#e01212" stroke-width="0.9"/><path d="M728.3 98.6L724.2 126.6" stroke="#18c018" stroke-width="0.9"/><path d="M728.3 98.6L729 103.4" stroke="#2020e0" stroke-width="0.9"/><g opacity="0.8"><polygon points="748.6,135 752.2,133.6 756,135 756,140.4 752.4,141.8 748.6,140.4" fill="#8f8fab"/><polygon points="748.6,135 752.2,133.6 756,135 752.4,136.4" fill="#a8a8c2"/><path d="M758.2 136.4h3l-1.5 1.8z" fill="#66668a"/></g><path d="M753.8 361.4L763.6 362.8" stroke="#d01818" stroke-width="0.8"/><path d="M753.8 361.4L752.2 371.4" stroke="#20a020" stroke-width="0.8"/><path d="M753.8 361.4l-1 -0.8" stroke="#2020c0" stroke-width="0.8"/><text x="764" y="363.6" font-size="3" fill="#d01818" font-family="Liberation Sans, sans-serif">x</text><text x="751" y="373.6" font-size="3" fill="#20a020" font-family="Liberation Sans, sans-serif">y</text></svg>
</div></body></html>
